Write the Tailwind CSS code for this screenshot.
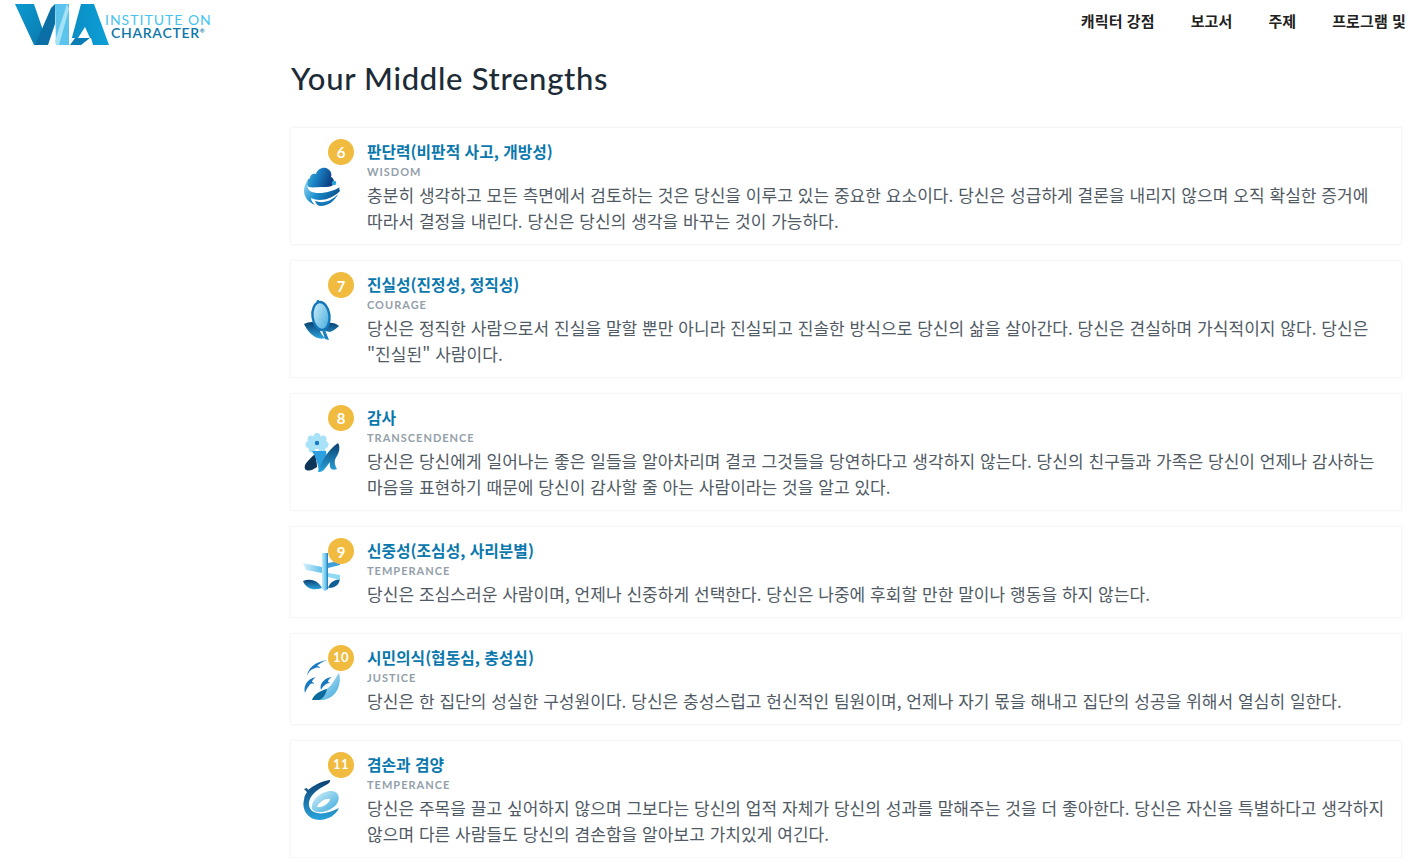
<!DOCTYPE html>
<html lang="ko"><head><meta charset="utf-8">
<script src="https://cdn.jsdelivr.net/npm/@tailwindcss/browser@4"></script>
</head>
<body class="bg-white overflow-hidden font-['Lato','Noto_Sans_CJK_KR',sans-serif]">
<svg width="0" height="0" class="absolute">
<defs>
<linearGradient id="g1" x1="0" y1="0" x2="1" y2="0.3"><stop offset="0" stop-color="#3ec0e0"/><stop offset=".5" stop-color="#1a7cc0"/><stop offset="1" stop-color="#0b3f82"/></linearGradient>
<linearGradient id="g2" x1="0" y1="0" x2="1" y2="0.5"><stop offset="0" stop-color="#9fe0f5"/><stop offset=".5" stop-color="#1c8fcf"/><stop offset="1" stop-color="#0a4f8e"/></linearGradient>
<linearGradient id="g3" x1="0" y1="0" x2="0" y2="1"><stop offset="0" stop-color="#0b3f70"/><stop offset="1" stop-color="#2aa5de"/></linearGradient>
<linearGradient id="g4" x1="0" y1="0" x2="1" y2="1"><stop offset="0" stop-color="#d8f3fb"/><stop offset="1" stop-color="#3aa7dc"/></linearGradient>
<linearGradient id="g5" x1="0" y1="0" x2="1" y2="0"><stop offset="0" stop-color="#c4ecf9"/><stop offset=".6" stop-color="#6cc6ec"/><stop offset="1" stop-color="#1578b8"/></linearGradient>
<linearGradient id="g6" x1="0" y1="0" x2="1" y2="0"><stop offset="0" stop-color="#d4f1fb"/><stop offset="1" stop-color="#64c0ea"/></linearGradient>
<linearGradient id="lv" x1="0" y1="0" x2="1" y2="1"><stop offset="0" stop-color="#0a9ad0"/><stop offset="1" stop-color="#0b78ad"/></linearGradient>
<linearGradient id="la" x1="0" y1="0" x2="1" y2="0"><stop offset="0" stop-color="#0a8cc4"/><stop offset="1" stop-color="#0ca0d6"/></linearGradient>
</defs>
</svg>
<header class="flex justify-between h-[57px]">
<div class="flex items-start pl-[15px] pt-[4px]">
<svg width="94" height="41" viewBox="0 0 94 41" class="shrink-0">
<polygon points="0,0 19,0 33,41 19,41" fill="url(#lv)"/>
<polygon points="20,41 33,41 40,20 40,0 36,4" fill="#0b6fa5"/>
<polygon points="40,0 54,0 54,41 41,41" fill="#5cc4ec"/>
<polygon points="52,0 54,5 44,41 41,41 40,37" fill="#a6e2f6"/>
<polygon points="55,41 66,0 79,0 94,41 78,41 76,34 57,34" fill="url(#la)"/>
<polygon points="70,23 75,34 63,34" fill="#fff"/>
<polygon points="55,41 60,34 75,34 66,41" fill="#0c7cb4"/>
</svg>
<div class="ml-[-4px] mt-[10px] flex flex-col leading-[12px] font-['Lato',sans-serif] font-normal">
<span class="text-[14px] tracking-[1px] text-[#45c4f0]">INSTITUTE ON</span>
<span class="text-[14px] pl-[6px] mt-[1px] tracking-[0.7px] font-semibold text-[#0c76a8]">CHARACTER<span class="text-[6px] align-top leading-[8px]">®</span></span>
</div>
</div>
<nav class="flex gap-[36px] pr-[4px] pt-[11px] text-[15px] font-bold leading-[20px] tracking-[0.1px] text-[#222] font-['Noto_Sans_CJK_KR',sans-serif]">
<a>캐릭터 강점</a><a>보고서</a><a>주제</a><a>프로그램 및</a>
</nav>
</header>
<main class="ml-[290px] w-[1112px]">
<h1 class="text-[31px] leading-[42px] tracking-[0.7px] pl-[1px] font-medium text-[#1c2b36] font-['Lato',sans-serif] mb-[28px]">Your Middle Strengths</h1>
<div class="flex flex-col gap-[15px]">

<article class="relative flex border border-[#f6f6f6] shadow-[0_0_3px_rgba(0,0,0,0.03)] pl-[12px] pr-[11px] pt-[14px] pb-[10px]">
<div class="relative w-[64px] shrink-0">
<svg class="absolute left-0 top-[25px]" width="38" height="40" viewBox="0 0 38 40">
<path d="M6 20c-3-2-3-7 1-9 0-3 3-5 6-4 1-5 8-8 12-5 3 2 4 5 3 8 3 1 4 6 2 8-2 2-6 2-10 2-5 0-11 1-14 0z" fill="url(#g1)"/>
<circle cx="31" cy="16" r="2.3" fill="#2a9fd8"/>
<path d="M5 13C-2 22 0 33 12 38c-3-3-4-5-4-7 8 4 20 2 29-7-1-2-1-3 0-4-6 4-22 9-30 4-3-2-3-6-2-11z" fill="url(#g2)"/>
<path d="M12 34c8 3 17 0 23-7-3 7-10 12-17 12-3 0-5-2-6-5z" fill="#1477b8"/>
</svg>
<span class="absolute z-10 left-[25px] top-[-3px] w-[26px] h-[26px] rounded-full bg-[#f0bb3e] text-white text-[15px] font-bold flex items-center justify-center">6</span>
</div>
<div class="flex-1 min-w-0">
<h2 class="text-[15.8px] leading-[20px] font-bold text-[#0a78ad] font-['Noto_Sans_CJK_KR',sans-serif]">판단력(비판적 사고, 개방성)</h2>
<p class="text-[11px] leading-[20px] tracking-[1px] font-bold text-[#93a0aa]">WISDOM</p>
<p class="text-[17px] leading-[26px] tracking-[0.05px] break-keep text-[#505a64] font-['Noto_Sans_CJK_KR',sans-serif]">충분히 생각하고 모든 측면에서 검토하는 것은 당신을 이루고 있는 중요한 요소이다. 당신은 성급하게 결론을 내리지 않으며 오직 확실한 증거에 따라서 결정을 내린다. 당신은 당신의 생각을 바꾸는 것이 가능하다.</p>
</div>
</article>

<article class="relative flex border border-[#f6f6f6] shadow-[0_0_3px_rgba(0,0,0,0.03)] pl-[12px] pr-[11px] pt-[14px] pb-[10px]">
<div class="relative w-[64px] shrink-0">
<svg class="absolute left-0 top-[25px]" width="38" height="40" viewBox="0 0 38 40">
<path d="M1 24c4-2 9-3 13-1 1 3 4 3 7 2 4-3 10-3 15 1-3 3-6 5-9 6l-5-1c-2-1-4-1-5 0 1 3 3 5 5 7-8 3-17-5-21-14z" fill="url(#g3)"/>
<ellipse cx="18" cy="16" rx="8.5" ry="14" fill="url(#g4)" stroke="#1478b8" stroke-width="2.4" transform="rotate(-7 18 16)"/>
<path d="M19 30l3 0 4 10-4-1z" fill="#1c80bf"/>
<circle cx="15" cy="1.4" r="1.4" fill="#1478b8"/>
</svg>
<span class="absolute z-10 left-[25px] top-[-3px] w-[26px] h-[26px] rounded-full bg-[#f0bb3e] text-white text-[15px] font-bold flex items-center justify-center pt-[3px]">7</span>
</div>
<div class="flex-1 min-w-0">
<h2 class="text-[15.8px] leading-[20px] font-bold text-[#0a78ad] font-['Noto_Sans_CJK_KR',sans-serif]">진실성(진정성, 정직성)</h2>
<p class="text-[11px] leading-[20px] tracking-[1px] font-bold text-[#93a0aa]">COURAGE</p>
<p class="text-[17px] leading-[26px] tracking-[0.05px] break-keep text-[#505a64] font-['Noto_Sans_CJK_KR',sans-serif]">당신은 정직한 사람으로서 진실을 말할 뿐만 아니라 진실되고 진솔한 방식으로 당신의 삶을 살아간다. 당신은 견실하며 가식적이지 않다. 당신은 "진실된" 사람이다.</p>
</div>
</article>

<article class="relative flex border border-[#f6f6f6] shadow-[0_0_3px_rgba(0,0,0,0.03)] pl-[12px] pr-[11px] pt-[14px] pb-[10px]">
<div class="relative w-[64px] shrink-0">
<svg class="absolute left-0 top-[25px]" width="38" height="40" viewBox="0 0 38 40">
<g fill="#a8e2f7"><circle cx="14" cy="3.5" r="3.5"/><circle cx="8" cy="6" r="3.5"/><circle cx="20" cy="6" r="3.5"/><circle cx="6" cy="11.5" r="3.5"/><circle cx="22" cy="11.5" r="3.5"/><circle cx="9" cy="16" r="3.5"/><circle cx="19" cy="16" r="3.5"/><circle cx="14" cy="10" r="6"/></g>
<circle cx="14" cy="10" r="2.2" fill="#1878c0"/>
<path d="M2 36c-2-5 6-11 10-15 1 4 2 9 2 13-4 3-9 5-12 2z" fill="#0e3557"/>
<path d="M9 18l14 0c2 7-2 15-7 21-1-8-3-15-7-21z" fill="#2c9fe0"/>
<path d="M15 39c3-10 10-22 20-29 2 3 2 8-1 13-3 4-3 8 0 13-5 2-8 0-7-7-4 5-7 11-12 10z" fill="url(#g3)"/>
</svg>
<span class="absolute z-10 left-[25px] top-[-3px] w-[26px] h-[26px] rounded-full bg-[#f0bb3e] text-white text-[15px] font-bold flex items-center justify-center">8</span>
</div>
<div class="flex-1 min-w-0">
<h2 class="text-[15.8px] leading-[20px] font-bold text-[#0a78ad] font-['Noto_Sans_CJK_KR',sans-serif]">감사</h2>
<p class="text-[11px] leading-[20px] tracking-[1px] font-bold text-[#93a0aa]">TRANSCENDENCE</p>
<p class="text-[17px] leading-[26px] tracking-[0.05px] break-keep text-[#505a64] font-['Noto_Sans_CJK_KR',sans-serif]">당신은 당신에게 일어나는 좋은 일들을 알아차리며 결코 그것들을 당연하다고 생각하지 않는다. 당신의 친구들과 가족은 당신이 언제나 감사하는 마음을 표현하기 때문에 당신이 감사할 줄 아는 사람이라는 것을 알고 있다.</p>
</div>
</article>

<article class="relative flex border border-[#f6f6f6] shadow-[0_0_3px_rgba(0,0,0,0.03)] pl-[12px] pr-[11px] pt-[14px] pb-[10px]">
<div class="relative w-[64px] shrink-0">
<svg class="absolute left-0 top-[12px]" width="38" height="40" viewBox="0 0 38 40">
<path d="M0 28c7-3 15-1 19 7-8 3-16 1-19-7z" fill="url(#g3)"/>
<path d="M25 35c2-6 6-8 12-9-1 6-5 9-12 9z" fill="#0f5f96"/>
<path d="M19 0h6v36l-3 2-3-2z" fill="url(#g5)"/>
<path d="M0 10l19 4v6L3 17z" fill="url(#g6)"/>
<path d="M25 10l11-2 1 4-12 3z" fill="#3f9fd8"/>
<path d="M25 20l12 2 0 5-12-3z" fill="#8fd9f3"/>
</svg>
<span class="absolute z-10 left-[25px] top-[-3px] w-[26px] h-[26px] rounded-full bg-[#f0bb3e] text-white text-[15px] font-bold flex items-center justify-center pt-[3px]">9</span>
</div>
<div class="flex-1 min-w-0">
<h2 class="text-[15.8px] leading-[20px] font-bold text-[#0a78ad] font-['Noto_Sans_CJK_KR',sans-serif]">신중성(조심성, 사리분별)</h2>
<p class="text-[11px] leading-[20px] tracking-[1px] font-bold text-[#93a0aa]">TEMPERANCE</p>
<p class="text-[17px] leading-[26px] tracking-[0.05px] break-keep text-[#505a64] font-['Noto_Sans_CJK_KR',sans-serif]">당신은 조심스러운 사람이며, 언제나 신중하게 선택한다. 당신은 나중에 후회할 만한 말이나 행동을 하지 않는다.</p>
</div>
</article>

<article class="relative flex border border-[#f6f6f6] shadow-[0_0_3px_rgba(0,0,0,0.03)] pl-[12px] pr-[11px] pt-[14px] pb-[10px]">
<div class="relative w-[64px] shrink-0">
<svg class="absolute left-0 top-[12px]" width="38" height="40" viewBox="0 0 38 40">
<g fill="#1878c0">
<path d="M4 16C5 8 12 2 24 0c-5 2-8 4-10 6 2 0 3 1 3 2-3-1-5 0-7 1-3 1-5 4-6 7z"/>
<path d="M2 33C0 26 4 19 13 17c-3 2-4 4-4 5 1 0 2 1 2 2-3-1-4 0-5 2-2 2-3 4-4 7z"/>
<path d="M18 30c-2-6 3-12 11-13-3 2-4 3-4 5 1 0 2 1 2 1-3 0-4 1-5 2-2 1-3 3-4 5z"/>
</g>
<path d="M9 40c2-6 10-9 16-12 5-4 7-10 11-15 2 6 1 18-8 24-6 4-14 4-19 3z" fill="url(#g4)"/>
<path d="M9 40c2-6 8-9 15-11-1 5-4 10-8 11z" fill="#0c6a9c"/>
</svg>
<span class="absolute z-10 left-[25px] top-[-3px] w-[26px] h-[26px] rounded-full bg-[#f0bb3e] text-white text-[13px] tracking-[0.5px] font-bold flex items-center justify-center">10</span>
</div>
<div class="flex-1 min-w-0">
<h2 class="text-[15.8px] leading-[20px] font-bold text-[#0a78ad] font-['Noto_Sans_CJK_KR',sans-serif]">시민의식(협동심, 충성심)</h2>
<p class="text-[11px] leading-[20px] tracking-[1px] font-bold text-[#93a0aa]">JUSTICE</p>
<p class="text-[17px] leading-[26px] tracking-[0.05px] break-keep text-[#505a64] font-['Noto_Sans_CJK_KR',sans-serif]">당신은 한 집단의 성실한 구성원이다. 당신은 충성스럽고 헌신적인 팀원이며, 언제나 자기 몫을 해내고 집단의 성공을 위해서 열심히 일한다.</p>
</div>
</article>

<article class="relative flex border border-[#f6f6f6] shadow-[0_0_3px_rgba(0,0,0,0.03)] pl-[12px] pr-[11px] pt-[14px] pb-[10px]">
<div class="relative w-[64px] shrink-0">
<svg class="absolute left-0 top-[25px]" width="38" height="40" viewBox="0 0 38 40">
<path d="M1 9l3-1 1 2c6-5 14-9 22-10 1 2-2 4-4 5-6 3-12 7-15 12-3 5-3 10 1 14 6 4 16 3 27-3-3 7-11 12-20 12C6 40-2 30 1 20c0-4 2-6 3-8z" fill="url(#g3)"/>
<path d="M9 29c-2-8 9-18 19-18 8 0 10 8 5 14-7 7-20 10-24 4z" fill="url(#g4)"/>
<path d="M14 27c1-4 8-9 13-8-1 5-8 9-13 8z" fill="#fff"/>
</svg>
<span class="absolute z-10 left-[25px] top-[-3px] w-[26px] h-[26px] rounded-full bg-[#f0bb3e] text-white text-[13px] tracking-[0.5px] font-bold flex items-center justify-center">11</span>
</div>
<div class="flex-1 min-w-0">
<h2 class="text-[15.8px] leading-[20px] font-bold text-[#0a78ad] font-['Noto_Sans_CJK_KR',sans-serif]">겸손과 겸양</h2>
<p class="text-[11px] leading-[20px] tracking-[1px] font-bold text-[#93a0aa]">TEMPERANCE</p>
<p class="text-[17px] leading-[26px] tracking-[0.05px] break-keep text-[#505a64] font-['Noto_Sans_CJK_KR',sans-serif]">당신은 주목을 끌고 싶어하지 않으며 그보다는 당신의 업적 자체가 당신의 성과를 말해주는 것을 더 좋아한다. 당신은 자신을 특별하다고 생각하지 않으며 다른 사람들도 당신의 겸손함을 알아보고 가치있게 여긴다.</p>
</div>
</article>
</div>
</main>
</body></html>
